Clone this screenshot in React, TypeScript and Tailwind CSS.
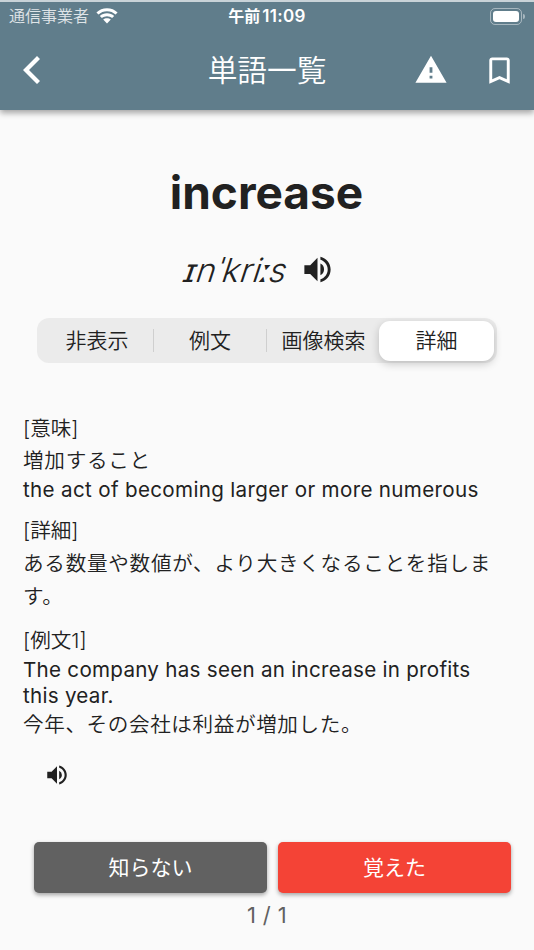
import clsx from "clsx";
import { useState } from "react";
import { MdBookmarkBorder, MdVolumeUp, MdWarning } from "react-icons/md";

const tabs = ["非表示", "例文", "画像検索", "詳細"];

const StatusBar = () => {
    return (
        <div className="flex h-7 items-center px-[9px] text-white">
            <div className="flex flex-1 items-center gap-[7px]">
                <span className="text-base leading-none font-[350] text-white/80">
                    通信事業者
                </span>
                <svg width="22" height="16" viewBox="0 0 22 16" fill="white">
                    <path d="M11 0.3C15.1 0.3 18.8 1.9 21.6 4.4L19.5 6.6C17.2 4.5 14.3 3.3 11 3.3S4.8 4.5 2.5 6.6L0.4 4.4C3.2 1.9 6.9 0.3 11 0.3Z" />
                    <path d="M11 5.3C13.8 5.3 16.3 6.4 18.2 8L16.1 10.1C14.7 8.9 12.9 8.2 11 8.2S7.3 8.9 5.9 10.1L3.8 8C5.7 6.4 8.2 5.3 11 5.3Z" />
                    <path d="M11 10.3C12.5 10.3 13.8 10.8 14.8 11.6L11 15.5L7.2 11.6C8.2 10.8 9.5 10.3 11 10.3Z" />
                </svg>
            </div>
            <span className="flex items-center gap-[2px] leading-none font-semibold">
                <span className="text-base leading-none">午前</span>
                <span className="text-[17px] leading-none tracking-[0.3px]">
                    11:09
                </span>
            </span>
            <div className="flex flex-1 items-center justify-end gap-px">
                <div className="h-[17px] w-8 rounded-[5px] border border-white/45 p-[2px]">
                    <div className="h-full w-full rounded-[3px] bg-white" />
                </div>
                <div className="h-[5px] w-[2px] rounded-r-full bg-white/45" />
            </div>
        </div>
    );
};

const Header = () => {
    return (
        <header className="h-[110px] border-t-2 border-[#c9d3d8] bg-[#607d8b] shadow-[0_3px_6px_rgba(0,0,0,0.35)]">
            <StatusBar />
            <div className="flex h-20 items-center px-[17px] text-white">
                <button type="button" aria-label="戻る" className="flex-1">
                    <svg
                        className="ml-[6px]"
                        width="17"
                        height="28"
                        viewBox="0 0 17 28"
                        fill="currentColor"
                    >
                        <path d="M14 0L17 3L6 14L17 25L14 28L0 14Z" />
                    </svg>
                </button>
                <h1 className="pt-px text-[29.7px] leading-none font-[350]">
                    単語一覧
                </h1>
                <div className="flex flex-1 justify-end gap-[34px]">
                    <MdWarning size={34} />
                    <MdBookmarkBorder size={35} />
                </div>
            </div>
        </header>
    );
};

const Tabs = () => {
    const [selected, setSelected] = useState(3);

    return (
        <div className="mx-[37px] mt-[23px] flex h-[45px] items-center rounded-xl bg-[#ebebeb] py-[3px] pr-[3px] pl-1">
            {tabs.map((tab, index) => (
                <button
                    key={tab}
                    type="button"
                    onClick={() => setSelected(index)}
                    className={clsx(
                        "flex flex-none items-center justify-center text-[21px] font-[350] whitespace-nowrap",
                        index === selected
                            ? "-ml-px h-10 w-[115px] rounded-[11px] bg-white shadow-[0_3px_9px_rgba(0,0,0,0.2)]"
                            : "h-[23px] w-[113px]",
                        index < 2 && "border-r border-[#cfcfcf]"
                    )}
                >
                    {tab}
                </button>
            ))}
        </div>
    );
};

export default function App() {
    return (
        <div
            lang="ja"
            className="flex h-[950px] w-[534px] flex-col bg-[#fafafa] font-[Inter,'Noto_Sans_CJK_JP',sans-serif] text-[#212121]"
        >
            <Header />
            <main className="flex flex-1 flex-col">
                <h2 className="mt-[52px] pr-px text-center text-[46px] leading-[60px] font-bold">
                    increase
                </h2>
                <div className="mt-[21px] flex h-[52px] items-center pl-[185px]">
                    <span className="w-[115px] -skew-x-[9deg] pt-[2px] text-[33px] leading-[50px] font-[350] tracking-[0.6px] whitespace-nowrap italic">
                        ɪnˈkri
                        <span className="-mx-[2px] font-['DejaVu_Sans']">
                            ː
                        </span>
                        s
                    </span>
                    <MdVolumeUp size={35} />
                </div>
                <Tabs />
                <div className="mt-[50px] px-[23px] text-[20.6px] font-[350] tracking-[0.72px]">
                    <section>
                        <p className="leading-8 tracking-normal">[意味]</p>
                        <p className="leading-8">増加すること</p>
                        <p className="leading-[26px] font-normal tracking-[0.33px] whitespace-nowrap">
                            the act of becoming larger or more numerous
                        </p>
                    </section>
                    <section className="mt-3">
                        <p className="leading-8 tracking-normal">[詳細]</p>
                        <p className="-mr-2 leading-[33px]">
                            ある数量や数値が、より大きくなることを指しま
                            <br />
                            す。
                        </p>
                    </section>
                    <section className="mt-3">
                        <p className="leading-8 tracking-normal">[例文1]</p>
                        <p className="leading-[26px] font-normal tracking-[0.27px] whitespace-nowrap">
                            The company has seen an increase in profits
                            <br />
                            this year.
                        </p>
                        <p className="leading-8 tracking-[0.6px]">
                            今年、その会社は利益が増加した。
                        </p>
                    </section>
                </div>
                <div className="mt-[21px] pl-[44px]">
                    <MdVolumeUp size={26} />
                </div>
                <div className="mt-auto mr-[23px] ml-[34px] flex gap-[11px] text-[21px] text-white">
                    <button
                        type="button"
                        className="h-[51px] flex-1 rounded-[5px] bg-[#616161] shadow-[0_2px_4px_rgba(0,0,0,0.35)]"
                    >
                        知らない
                    </button>
                    <button
                        type="button"
                        className="h-[51px] flex-1 rounded-[5px] bg-[#f44336] shadow-[0_2px_4px_rgba(0,0,0,0.35)]"
                    >
                        覚えた
                    </button>
                </div>
                <p className="mt-[8px] mb-[21px] text-center text-[22px] leading-7 tracking-[0.4px] text-[#616161]">
                    1 / 1
                </p>
            </main>
        </div>
    );
}
